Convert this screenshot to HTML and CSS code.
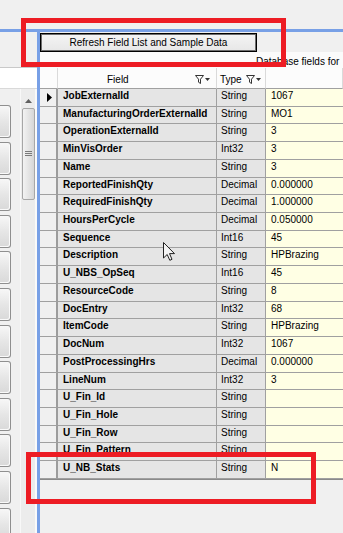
FILE: index.html
```html
<!DOCTYPE html>
<html>
<head>
<meta charset="utf-8">
<link rel="stylesheet" href="styles.css">
</head>
<body>
<div class="screen">
  <div class="topbar"></div>
  <div class="hline"></div>
  <div class="main">
    <div class="left">
      <div class="left-top"></div>
      <div class="left-head"></div>
      <div class="left-body">
        <div class="btncol">
          <div class="lbtn"></div><div class="lbtn"></div><div class="lbtn"></div><div class="lbtn"></div>
          <div class="lbtn"></div><div class="lbtn"></div><div class="lbtn"></div><div class="lbtn"></div>
          <div class="lbtn"></div><div class="lbtn"></div><div class="lbtn"></div><div class="lbtn"></div>
        </div>
        <div class="lgap"></div>
        <div class="scroll">
          <svg class="sarrow" width="7" height="4" viewBox="0 0 7 4"><path d="M0 4L3.5 0L7 4Z" fill="#606060"/></svg>
          <div class="thumb">
            <svg width="7" height="6" viewBox="0 0 7 6"><path d="M0 0.5h7M0 2.5h7M0 4.5h7" stroke="#7a7a7a" stroke-width="1"/></svg>
          </div>
        </div>
        <div class="edge"></div>
      </div>
    </div>
    <div class="vline"></div>
    <div class="right">
      <div class="btnrow"><button class="refresh">Refresh Field List and Sample Data</button></div>
      <div class="caption">Database fields for</div>
      <div class="grid">
        <div class="hc"></div>
        <div class="hc hfield"><span>Field</span>
          <span class="hicons"><svg width="9" height="9" viewBox="0 0 9 9"><path d="M0.5 0.5h8L5.5 4.2v4.3l-2-1.3V4.2z" fill="none" stroke="#333"/></svg><svg width="5" height="3" viewBox="0 0 5 3"><path d="M0 0h5L2.5 3z" fill="#333"/></svg></span>
        </div>
        <div class="hc htype"><span>Type</span>
          <span class="hicons"><svg width="9" height="9" viewBox="0 0 9 9"><path d="M0.5 0.5h8L5.5 4.2v4.3l-2-1.3V4.2z" fill="none" stroke="#333"/></svg><svg width="5" height="3" viewBox="0 0 5 3"><path d="M0 0h5L2.5 3z" fill="#333"/></svg></span>
        </div>
        <div class="hc hval"></div>

        <div class="rh"><svg width="5" height="9" viewBox="0 0 5 9"><path d="M0 0L5 4.5L0 9Z" fill="#000"/></svg></div><div class="fc">JobExternalId</div><div class="tc">String</div><div class="vc">1067</div>
        <div class="rh"></div><div class="fc">ManufacturingOrderExternalId</div><div class="tc">String</div><div class="vc">MO1</div>
        <div class="rh"></div><div class="fc">OperationExternalId</div><div class="tc">String</div><div class="vc">3</div>
        <div class="rh"></div><div class="fc">MinVisOrder</div><div class="tc">Int32</div><div class="vc">3</div>
        <div class="rh"></div><div class="fc">Name</div><div class="tc">String</div><div class="vc">3</div>
        <div class="rh"></div><div class="fc">ReportedFinishQty</div><div class="tc">Decimal</div><div class="vc">0.000000</div>
        <div class="rh"></div><div class="fc">RequiredFinishQty</div><div class="tc">Decimal</div><div class="vc">1.000000</div>
        <div class="rh"></div><div class="fc">HoursPerCycle</div><div class="tc">Decimal</div><div class="vc">0.050000</div>
        <div class="rh"></div><div class="fc">Sequence</div><div class="tc">Int16</div><div class="vc">45</div>
        <div class="rh"></div><div class="fc">Description</div><div class="tc">String</div><div class="vc">HPBrazing</div>
        <div class="rh"></div><div class="fc">U_NBS_OpSeq</div><div class="tc">Int16</div><div class="vc">45</div>
        <div class="rh"></div><div class="fc">ResourceCode</div><div class="tc">String</div><div class="vc">8</div>
        <div class="rh"></div><div class="fc">DocEntry</div><div class="tc">Int32</div><div class="vc">68</div>
        <div class="rh"></div><div class="fc">ItemCode</div><div class="tc">String</div><div class="vc">HPBrazing</div>
        <div class="rh"></div><div class="fc">DocNum</div><div class="tc">Int32</div><div class="vc">1067</div>
        <div class="rh"></div><div class="fc">PostProcessingHrs</div><div class="tc">Decimal</div><div class="vc">0.000000</div>
        <div class="rh"></div><div class="fc">LineNum</div><div class="tc">Int32</div><div class="vc">3</div>
        <div class="rh"></div><div class="fc">U_Fin_Id</div><div class="tc">String</div><div class="vc"></div>
        <div class="rh"></div><div class="fc">U_Fin_Hole</div><div class="tc">String</div><div class="vc"></div>
        <div class="rh"></div><div class="fc">U_Fin_Row</div><div class="tc">String</div><div class="vc"></div>
        <div class="rh"></div><div class="fc">U_Fin_Pattern</div><div class="tc">String</div><div class="vc"></div>
        <div class="rh"></div><div class="fc">U_NB_Stats</div><div class="tc">String</div><div class="vc">N</div>
      </div>
    </div>
  </div>
  <div class="redbox r1"></div>
  <div class="redbox r2"></div>
  <svg class="cursor" width="12" height="19" viewBox="0 0 12 19"><path d="M0.5 0.5V16L4.2 12.5L6.8 18.3L9 17.3L6.5 11.6H11.5Z" fill="#f4f4f4" stroke="#222" stroke-width="1" stroke-linejoin="round"/></svg>
</div>
</body>
</html>
```

FILE: styles.css
```css
* { box-sizing: border-box; }
html, body { margin: 0; padding: 0; }
body {
  width: 343px;
  height: 533px;
  overflow: hidden;
  background: #f0f0f0;
  font-family: "Liberation Sans", Arial, sans-serif;
  font-size: 10px;
  color: #000;
}
.screen {
  position: relative;
  width: 343px;
  height: 533px;
  overflow: hidden;
  display: flex;
  flex-direction: column;
}
.topbar { height: 29px; flex: none; background: #f0f0f0; }
.hline { height: 3px; flex: none; background: #78a0e6; }
.main { flex: 1; display: flex; min-height: 0; }

/* left pane */
.left { width: 37px; flex: none; display: flex; flex-direction: column; }
.left-top { height: 36px; flex: none; background: #f0f0f0; border-bottom: 1px solid #c9c9c9; }
.left-head { height: 21px; flex: none; background: #fff; border-bottom: 1px solid #d9d9d9; }
.left-body { flex: 1; display: flex; background: #f0f0f0; min-height: 0; }
.btncol {
  width: 11px;
  flex: none;
  padding-top: 16px;
  display: flex;
  flex-direction: column;
  gap: 3.6px;
  overflow: hidden;
}
.lbtn {
  height: 33px;
  flex: none;
  border: 1px solid #8f8f8f;
  border-left: none;
  border-radius: 0 3px 3px 0;
  background: linear-gradient(#f7f7f7, #e6e6e6 50%, #d9d9d9);
  box-shadow: inset -1px -1px 0 #fafafa;
}
.lgap { width: 9px; flex: none; }
.scroll {
  width: 15px;
  flex: none;
  background: #ececec;
  border-left: 1px solid #f8f8f8;
  display: flex;
  flex-direction: column;
  align-items: center;
}
.sarrow { margin-top: 10px; flex: none; }
.thumb {
  margin-top: 5px;
  width: 13px;
  height: 92px;
  flex: none;
  border: 1px solid #a7a7a7;
  border-radius: 2px;
  background: linear-gradient(90deg, #f3f3f3, #e2e2e2 60%, #d6d6d6);
  display: flex;
  align-items: center;
  justify-content: center;
}
.edge { width: 2px; flex: none; background: #fafafa; }
.vline { width: 3px; flex: none; background: #78a0e6; }

/* right pane */
.right {
  flex: 1;
  min-width: 0;
  display: flex;
  flex-direction: column;
  background: #f0f0f0;
  overflow: hidden;
}
.btnrow { height: 20px; flex: none; padding-top: 1px; }
.refresh {
  display: block;
  width: 217px;
  height: 19px;
  margin: 0;
  padding: 0;
  border: 1px solid #000;
  box-shadow: inset 0 0 0 1px #6d6d6d;
  background: linear-gradient(#f4f4f4, #e7e7e7);
  font-family: "Liberation Sans", Arial, sans-serif;
  font-size: 10px;
  color: #000;
  text-align: center;
}
.caption {
  height: 16px;
  flex: none;
  background: #fbfbfb;
  padding: 3.5px 0 0 216px;
  line-height: 12px;
  white-space: nowrap;
  overflow: hidden;
}
.grid {
  flex: none;
  display: grid;
  grid-template-columns: 18px 159px 49px 1fr;
  grid-template-rows: 21px repeat(22, 17.73px);
  border-bottom: 1px solid #8a8a8a;
}
.hc {
  background: #fcfcfc;
  border-bottom: 1px solid #a0a0a0;
  border-right: 1px solid #dadada;
  display: flex;
  align-items: center;
  padding-top: 3px;
  white-space: nowrap;
  overflow: hidden;
}
.hfield { padding-left: 49px; }
.htype { padding-left: 3px; }
.hicons {
  display: flex;
  align-items: center;
  gap: 1px;
}
.hfield .hicons { margin-left: auto; margin-right: 6px; }
.htype .hicons { margin-left: 4px; }
.rh {
  background: #f0f0f0;
  border-right: 2px solid #9c9c9c;
  border-bottom: 1px solid #a0a0a0;
  display: flex;
  align-items: center;
  padding-left: 7px;
}
.fc, .tc, .vc {
  border-bottom: 1px solid #a0a0a0;
  line-height: 14px;
  white-space: nowrap;
  overflow: hidden;
}
.fc {
  background: #e5e5e5;
  border-right: 1px solid #a0a0a0;
  font-weight: bold;
  padding-left: 5px;
  color: #000;
}
.tc {
  background: #e5e5e5;
  border-right: 1px solid #a0a0a0;
  padding-left: 4px;
}
.vc {
  background: #ffffe4;
  padding-left: 5px;
}

/* overlays */
.redbox {
  position: absolute;
  border: 5px solid #ed1c24;
}
.r1 { left: 21px; top: 18px; width: 265px; height: 49px; }
.r2 { left: 26px; top: 452px; width: 290px; height: 52px; }
.cursor { position: absolute; left: 163px; top: 242px; }
```
